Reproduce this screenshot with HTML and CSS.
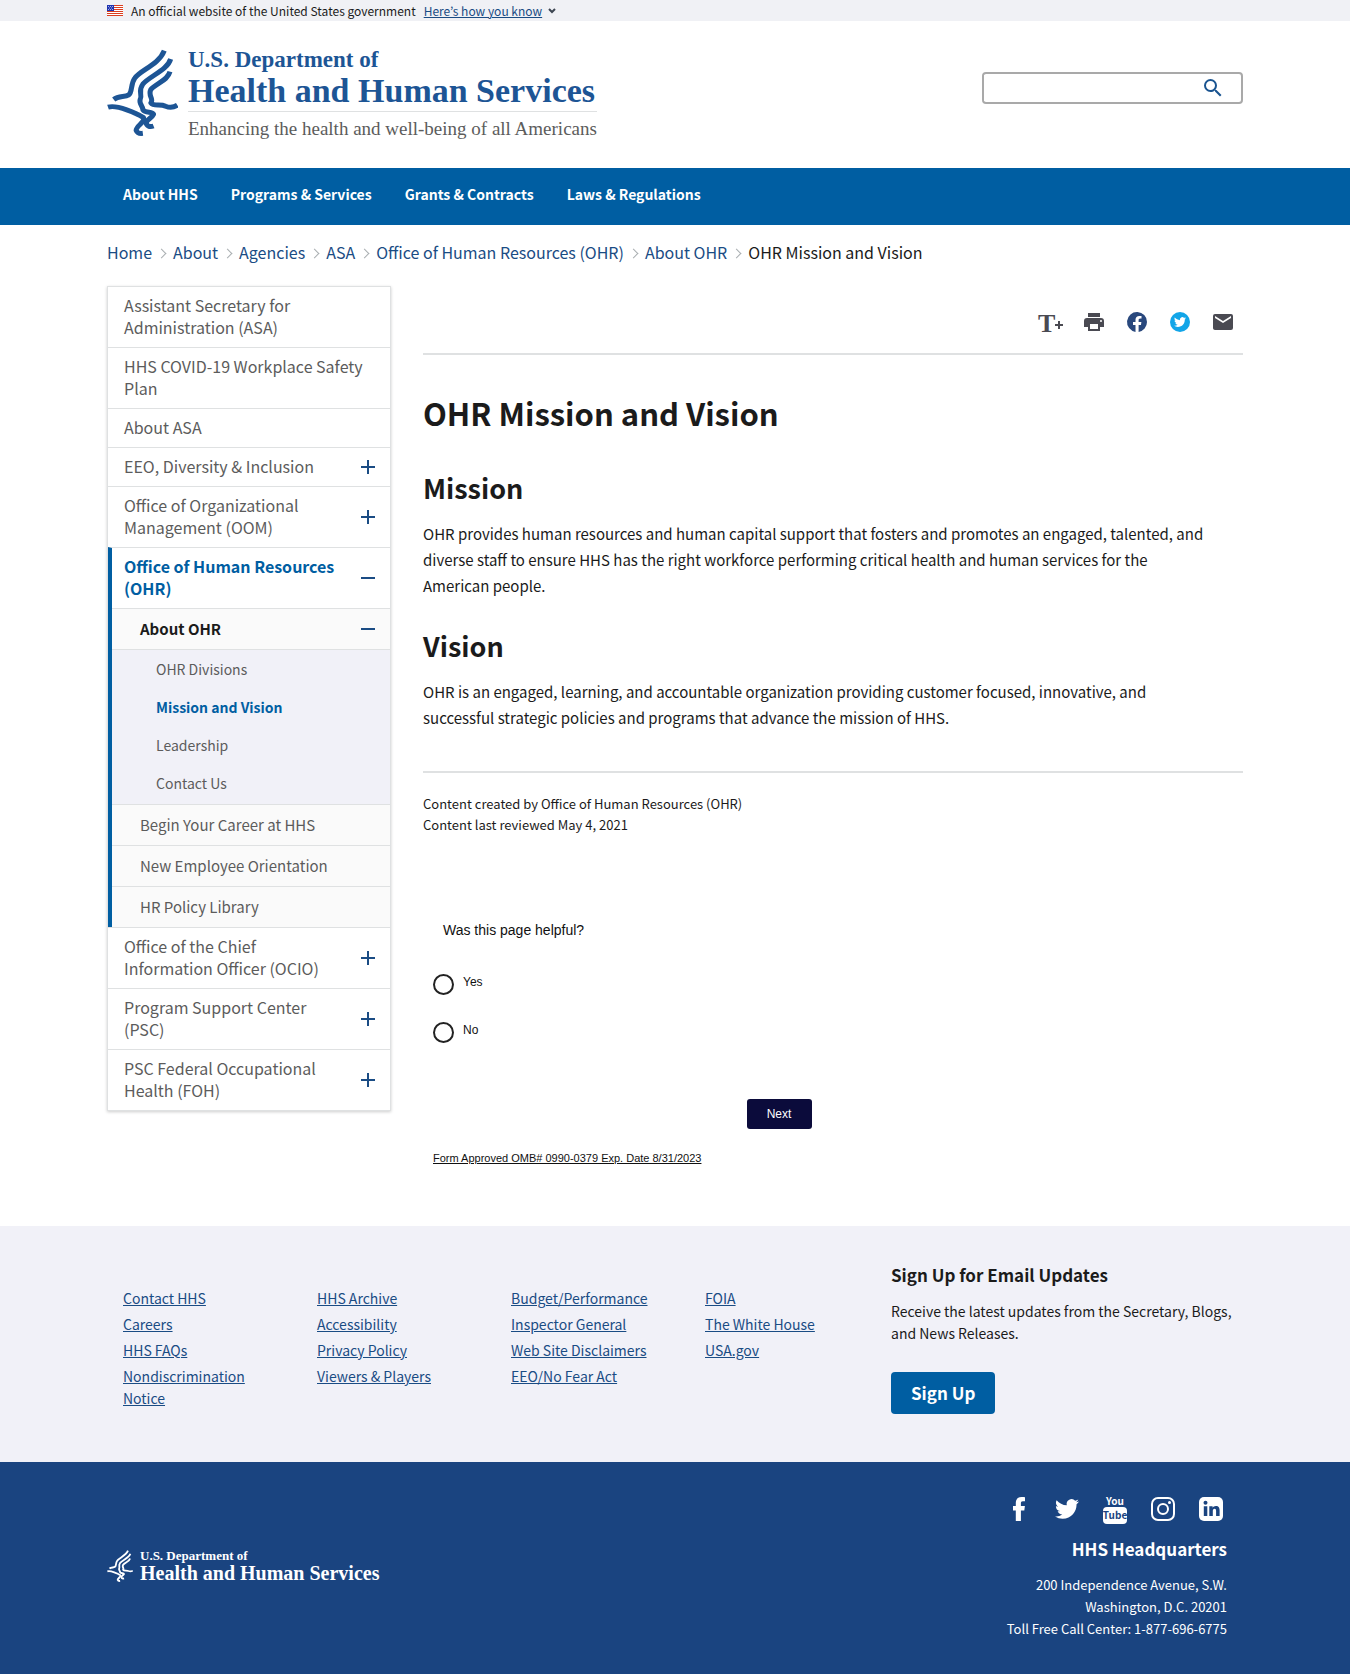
FILE: index.html
```html
<!DOCTYPE html>
<html lang="en">
<head>
<meta charset="utf-8">
<meta name="viewport" content="width=device-width, initial-scale=1">
<title>OHR Mission and Vision | HHS.gov</title>
<link rel="stylesheet" href="styles.css">
</head>
<body>
<svg class="sprite" aria-hidden="true">
  <symbol id="eagle" viewBox="51 150 212 258">
    <g fill="none" stroke="currentColor" stroke-width="15" stroke-linejoin="round">
      <path d="M71 300C86 288 104 294 116 286C128 276 120 256 134 236C150 212 206 196 222 154"/>
      <path d="M241 179C232 212 178 230 158 254C142 276 158 284 150 300C146 314 158 318 158 330C166 342 186 334 190 344C184 358 168 358 168 372C172 382 182 382 190 379"/>
      <path d="M239 217C232 244 200 250 182 270C172 290 192 296 182 310C190 322 210 312 226 320C240 326 250 324 261 317"/>
      <path d="M54 323C80 314 142 342 160 354C166 368 138 378 138 392C142 402 150 402 158 401"/>
    </g>
  </symbol>
  <symbol id="plus" viewBox="0 0 14 14"><path d="M7 0v14M0 7h14" stroke="currentColor" stroke-width="2"/></symbol>
  <symbol id="minus" viewBox="0 0 14 14"><path d="M0 7h14" stroke="currentColor" stroke-width="2"/></symbol>
  <symbol id="twitter" viewBox="0 0 24 24"><path fill="currentColor" d="M23.95 4.57a10 10 0 0 1-2.82.77 4.96 4.96 0 0 0 2.16-2.72c-.95.56-2 .96-3.12 1.19a4.92 4.92 0 0 0-8.39 4.48C7.69 8.09 4.07 6.13 1.64 3.16a4.82 4.82 0 0 0-.67 2.48c0 1.71.87 3.21 2.19 4.1a4.9 4.9 0 0 1-2.23-.62v.06a4.92 4.92 0 0 0 3.95 4.83 5 5 0 0 1-2.21.08 4.94 4.94 0 0 0 4.6 3.42A9.87 9.87 0 0 1 0 19.54a13.99 13.99 0 0 0 7.55 2.21c9.05 0 14-7.5 14-13.98 0-.21 0-.42-.02-.63a9.94 9.94 0 0 0 2.46-2.55z"/></symbol>
</svg>

<section class="banner" aria-label="Official government website">
  <div class="container banner-inner">
    <svg class="flag" viewBox="0 0 16 11" aria-hidden="true">
      <path fill="#fff" d="M0 0h16v11H0z"/>
      <path stroke="#db3e1f" d="M0 .5h16M0 2.5h16M0 4.5h16M0 6.5h16M0 8.5h16M0 10.5h16"/>
      <path fill="#1e33b1" d="M0 0h7v6H0z"/>
      <path stroke="#fff" stroke-dasharray="1 1" stroke-width=".6" d="M1 1.5h5M2 3h4M1 4.5h5"/>
    </svg>
    <span>An official website of the United States government</span>
    <button class="banner-button" type="button"><span>Here’s how you know</span>
      <svg width="8" height="6" viewBox="0 0 8 6" aria-hidden="true"><path d="M1 1l3 3 3-3" fill="none" stroke="currentColor" stroke-width="2"/></svg>
    </button>
  </div>
</section>

<header>
  <div class="container header-inner">
    <a class="logo" href="#">
      <svg class="logo-mark" aria-hidden="true"><use href="#eagle"/></svg>
      <span class="logo-text">
        <span class="logo-dept">U.S. Department of</span>
        <span class="logo-name">Health and Human Services</span>
        <span class="logo-tag">Enhancing the health and well-being of all Americans</span>
      </span>
    </a>
    <form class="search" role="search">
      <input type="search" aria-label="Search">
      <button type="button" aria-label="Submit search">
        <svg width="24" height="24" viewBox="0 0 24 24" aria-hidden="true"><path fill="currentColor" d="M15.5 14h-.79l-.28-.27A6.47 6.47 0 0 0 16 9.5 6.5 6.5 0 1 0 9.5 16c1.61 0 3.09-.59 4.23-1.57l.27.28v.79l5 4.99L20.49 19l-4.99-5zm-6 0a4.5 4.5 0 1 1 0-9 4.5 4.5 0 0 1 0 9z"/></svg>
      </button>
    </form>
  </div>
  <nav class="main-nav" aria-label="Primary">
    <ul class="container">
      <li><a href="#">About HHS</a></li>
      <li><a href="#">Programs &amp; Services</a></li>
      <li><a href="#">Grants &amp; Contracts</a></li>
      <li><a href="#">Laws &amp; Regulations</a></li>
    </ul>
  </nav>
</header>

<nav class="container" aria-label="Breadcrumb">
  <ol class="breadcrumb">
    <li><a href="#">Home</a></li>
    <li><a href="#">About</a></li>
    <li><a href="#">Agencies</a></li>
    <li><a href="#">ASA</a></li>
    <li><a href="#">Office of Human Resources (OHR)</a></li>
    <li><a href="#">About OHR</a></li>
    <li aria-current="page">OHR Mission and Vision</li>
  </ol>
</nav>

<div class="container columns">
  <nav class="sidenav" aria-label="Section">
    <ul>
      <li><div class="row"><a href="#">Assistant Secretary for Administration (ASA)</a></div></li>
      <li><div class="row"><a href="#">HHS COVID-19 Workplace Safety Plan</a></div></li>
      <li><div class="row"><a href="#">About ASA</a></div></li>
      <li><div class="row"><a href="#">EEO, Diversity &amp; Inclusion</a><button type="button" aria-label="Expand"><svg><use href="#plus"/></svg></button></div></li>
      <li><div class="row"><a href="#">Office of Organizational Management (OOM)</a><button type="button" aria-label="Expand"><svg><use href="#plus"/></svg></button></div></li>
      <li class="open">
        <div class="row"><a href="#">Office of Human Resources (OHR)</a><button type="button" aria-label="Collapse"><svg><use href="#minus"/></svg></button></div>
        <ul class="level-2">
          <li><div class="row current-parent"><a href="#">About OHR</a><button type="button" aria-label="Collapse"><svg><use href="#minus"/></svg></button></div>
            <ul class="level-3">
              <li><a href="#">OHR Divisions</a></li>
              <li><a class="current" href="#">Mission and Vision</a></li>
              <li><a href="#">Leadership</a></li>
              <li><a href="#">Contact Us</a></li>
            </ul>
          </li>
          <li><div class="row"><a href="#">Begin Your Career at HHS</a></div></li>
          <li><div class="row"><a href="#">New Employee Orientation</a></div></li>
          <li><div class="row"><a href="#">HR Policy Library</a></div></li>
        </ul>
      </li>
      <li><div class="row"><a href="#">Office of the Chief Information Officer (OCIO)</a><button type="button" aria-label="Expand"><svg><use href="#plus"/></svg></button></div></li>
      <li><div class="row"><a href="#">Program Support Center (PSC)</a><button type="button" aria-label="Expand"><svg><use href="#plus"/></svg></button></div></li>
      <li><div class="row"><a href="#">PSC Federal Occupational Health (FOH)</a><button type="button" aria-label="Expand"><svg><use href="#plus"/></svg></button></div></li>
    </ul>
  </nav>

  <main>
    <div class="tools">
      <button type="button" aria-label="Text resize"><svg viewBox="0 0 24 24"><text class="big-t" x="-1" y="22">T</text><path stroke="currentColor" stroke-width="2" d="M16 15h8M20 11v8"/></svg></button>
      <button type="button" aria-label="Print"><svg viewBox="0 0 24 24"><path fill="currentColor" d="M19 8H5a3 3 0 0 0-3 3v6h4v4h12v-4h4v-6a3 3 0 0 0-3-3zm-3 11H8v-5h8v5zm3-7a1 1 0 1 1 0-2 1 1 0 0 1 0 2zm-1-9H6v4h12V3z"/></svg></button>
      <a class="facebook" href="#" aria-label="Share on Facebook"><svg viewBox="0 0 24 24"><path fill="currentColor" d="M22 12a10 10 0 1 0-11.5 9.88v-7H8V12h2.500V9.800c0-2.500 1.500-3.900 3.770-3.900 1.100 0 2.240.2 2.240.2v2.460h-1.260c-1.240 0-1.630.77-1.630 1.560V12h2.770l-.44 2.890h-2.330v7A10 10 0 0 0 22 12z"/></svg></a>
      <a class="twitter" href="#" aria-label="Share on Twitter"><svg viewBox="0 0 24 24"><circle cx="12" cy="12" r="10" fill="currentColor"/><svg class="bird" x="6" y="6" width="12" height="12"><use href="#twitter"/></svg></svg></a>
      <a href="#" aria-label="Share by email"><svg viewBox="0 0 24 24"><path fill="currentColor" d="M20 4H4a2 2 0 0 0-2 2v12c0 1.100.9 2 2 2h16a2 2 0 0 0 2-2V6a2 2 0 0 0-2-2zm0 4-8 5-8-5V6l8 5 8-5v2z"/></svg></a>
    </div>

    <article>
      <h1>OHR Mission and Vision</h1>
      <h2>Mission</h2>
      <p>OHR provides human resources and human capital support that fosters and promotes an engaged, talented, and diverse staff to ensure HHS has the right workforce performing critical health and human services for the American people.</p>
      <h2>Vision</h2>
      <p>OHR is an engaged, learning, and accountable organization providing customer focused, innovative, and successful strategic policies and programs that advance the mission of HHS.</p>
    </article>

    <div class="meta">
      <div>Content created by Office of Human Resources (OHR)</div>
      <div>Content last reviewed May 4, 2021</div>
    </div>

    <form class="survey">
      <fieldset>
        <legend>Was this page helpful?</legend>
        <label><input type="radio" name="helpful" value="yes"><span>Yes</span></label>
        <label><input type="radio" name="helpful" value="no"><span>No</span></label>
      </fieldset>
      <button type="button">Next</button>
      <a href="#">Form Approved OMB# 0990-0379 Exp. Date 8/31/2023</a>
    </form>
  </main>
</div>

<footer>
  <div class="footer-top">
    <div class="container footer-grid">
      <ul>
        <li><a href="#">Contact HHS</a></li>
        <li><a href="#">Careers</a></li>
        <li><a href="#">HHS FAQs</a></li>
        <li><a href="#">Nondiscrimination Notice</a></li>
      </ul>
      <ul>
        <li><a href="#">HHS Archive</a></li>
        <li><a href="#">Accessibility</a></li>
        <li><a href="#">Privacy Policy</a></li>
        <li><a href="#">Viewers &amp; Players</a></li>
      </ul>
      <ul>
        <li><a href="#">Budget/Performance</a></li>
        <li><a href="#">Inspector General</a></li>
        <li><a href="#">Web Site Disclaimers</a></li>
        <li><a href="#">EEO/No Fear Act</a></li>
      </ul>
      <ul>
        <li><a href="#">FOIA</a></li>
        <li><a href="#">The White House</a></li>
        <li><a href="#">USA.gov</a></li>
      </ul>
      <section class="signup">
        <h3>Sign Up for Email Updates</h3>
        <p>Receive the latest updates from the Secretary, Blogs, and News Releases.</p>
        <button type="button">Sign Up</button>
      </section>
    </div>
  </div>
  <div class="footer-bottom">
    <div class="container footer-row">
      <a class="logo logo-small" href="#">
        <svg class="logo-mark" aria-hidden="true"><use href="#eagle"/></svg>
        <span class="logo-text">
          <span class="logo-dept">U.S. Department of</span>
          <span class="logo-name">Health and Human Services</span>
        </span>
      </a>
      <div class="contact">
        <div class="social">
          <a href="#" aria-label="Facebook"><svg viewBox="0 0 24 24"><path fill="currentColor" d="M8.800 24V13.400H6V9h2.800V6C8.800 2.200 10.900 0 14.600 0c1.300 0 2.600.1 3.400.2v4h-2.100c-1.600 0-2 .8-2 2V9h4l-.6 4.400h-3.400V24z"/></svg></a>
          <a href="#" aria-label="Twitter"><svg><use href="#twitter"/></svg></a>
          <a href="#" aria-label="YouTube"><svg class="youtube" viewBox="0 0 24 30"><text class="yt" x="12" y="11">You</text><rect y="13" width="24" height="17" rx="4" fill="currentColor"/><text class="yt yt-dark" x="12" y="25">Tube</text></svg></a>
          <a href="#" aria-label="Instagram"><svg viewBox="0 0 24 24"><g fill="none" stroke="currentColor" stroke-width="2"><rect x="1" y="1" width="22" height="22" rx="6"/><circle cx="12" cy="12" r="5"/></g><circle cx="18.500" cy="5.500" r="1.500" fill="currentColor"/></svg></a>
          <a href="#" aria-label="LinkedIn"><svg viewBox="0 0 24 24"><rect width="24" height="24" rx="5" fill="currentColor"/><g class="li"><circle cx="6.500" cy="5.800" r="2"/><path d="M4.800 9.200h3.500V19H4.800zM10.300 9.200h3.300v1.500c.6-1 1.700-1.800 3.300-1.800 2.900 0 3.700 1.900 3.700 4.500V19h-3.500v-5c0-1.300-.2-2.300-1.500-2.300s-1.800 1-1.800 2.300v5h-3.500z"/></g></svg></a>
        </div>
        <h3>HHS Headquarters</h3>
        <address>200 Independence Avenue, S.W.<br>Washington, D.C. 20201<br>Toll Free Call Center: 1-877-696-6775</address>
      </div>
    </div>
  </div>
</footer>
</body>
</html>
```
FILE: styles.css
```css
* { box-sizing: border-box; }

body {
  margin: 0;
  background: #fff;
  color: #1b1b1b;
  font-family: "Noto Sans CJK KR", "Noto Sans", sans-serif;
  font-size: 16px;
  line-height: 22px;
}

h1, h2, h3, p, ul, ol { margin: 0; padding: 0; }
ul, ol { list-style: none; }
a { color: #1a4c84; }
button { font: inherit; border: 0; padding: 0; background: none; cursor: pointer; }
.sprite { display: none; }

.container {
  max-width: 1200px;
  margin: 0 auto;
  padding: 0 32px;
}

/* Government banner */
.banner { background: #f0f1f5; font-size: 12px; line-height: 21px; }
.banner-inner { display: flex; align-items: center; gap: 8px; }
.flag { width: 16px; height: 11px; }
.banner-button { display: flex; align-items: center; gap: 6px; color: #3d4551; }
.banner-button span { color: #1a4c84; text-decoration: underline; }

/* Header */
.header-inner {
  display: flex;
  align-items: flex-start;
  justify-content: space-between;
  height: 147px;
  padding-top: 28px;
}
.logo {
  display: flex;
  gap: 10px;
  color: #1d5595;
  text-decoration: none;
  font-family: "Liberation Serif", serif;
}
.logo-mark { width: 71px; height: 87px; }
.logo-text { display: flex; flex-direction: column; white-space: nowrap; }
.logo-dept { font-size: 23px; line-height: 22px; font-weight: bold; }
.logo-name { font-size: 34px; line-height: 40px; font-weight: bold; }
.logo-tag {
  border-top: 1px solid #dfe1e2;
  color: #5c5c5c;
  font-size: 19px;
  line-height: 34px;
}
.search {
  display: flex;
  align-items: center;
  width: 261px;
  height: 32px;
  margin-top: 23px;
  border: 2px solid #a9a9a9;
  border-radius: 4px;
}
.search input { flex: 1; min-width: 0; height: 26px; border: 0; outline: 0; }
.search button { width: 56px; height: 28px; display: grid; place-items: center; color: #1a5490; }

.main-nav { background: #005ea2; }
.main-nav ul { display: flex; gap: 33px; padding: 15px 48px 20px; }
.main-nav a { display: block; color: #fff; font-size: 14px; font-weight: bold; text-decoration: none; }

/* Breadcrumb */
.breadcrumb { display: flex; padding: 16px 0 23px; }
.breadcrumb a { text-decoration: none; }
.breadcrumb li { display: flex; align-items: center; }
.breadcrumb li + li::before {
  content: "";
  width: 6px;
  height: 6px;
  margin: 2px 8px 0 6px;
  border: solid #a9aeb1;
  border-width: 1px 1px 0 0;
  transform: rotate(45deg);
}

/* Two-column body */
.columns { display: grid; grid-template-columns: 284px minmax(0, 1fr); gap: 32px; align-items: start; }

.sidenav { border: 1px solid #dfe1e2; box-shadow: 0 1px 3px rgba(0, 0, 0, .2); }
.sidenav a { display: block; color: #5c5c5c; text-decoration: none; }
.sidenav > ul > li + li, .level-2 > li, .level-3 { border-top: 1px solid #dfe1e2; }
.row { display: flex; align-items: center; }
.row a { flex: 1; padding: 7px 8px 9px 16px; }
.row button { width: 44px; height: 30px; display: grid; place-items: center; color: #1a4c84; }
.row svg { width: 14px; height: 14px; }
.open { border-left: 4px solid #005ea2; }
.open > .row a { padding-left: 12px; color: #005ea2; font-weight: bold; }
.level-2 { background: #fafafa; font-size: 15px; }
.level-2 .row a { padding: 9px 28px; }
.level-2 .current-parent a { color: #1b1b1b; font-weight: bold; }
.level-3 { background: #f1f1f8; padding-bottom: 2px; }
.level-3 a { padding: 8px 44px; font-size: 14px; }
.level-3 .current { color: #005ea2; font-weight: bold; }

.tools {
  display: flex;
  justify-content: flex-end;
  gap: 19px;
  padding: 24px 8px 19px 0;
  border-bottom: 2px solid #dfe1e2;
}
.tools a, .tools button { color: #4a4a52; height: 24px; }
.tools svg { display: block; width: 24px; height: 24px; overflow: visible; }
.tools .bird { width: 12px; height: 12px; color: #fff; }
.tools .facebook { color: #29487d; }
.tools .twitter { color: #12a5e8; }
.big-t { font: bold 26px "Liberation Serif", serif; fill: currentColor; }

article { padding: 34px 0 40px; border-bottom: 2px solid #dfe1e2; }
h1 { font-size: 31px; line-height: 48px; }
h2 { margin-top: 32px; font-size: 27px; line-height: 38px; }
article p { margin-top: 14px; padding-right: 32px; font-size: 15px; line-height: 26px; }
p + h2 { margin-top: 28px; }
.meta { padding-top: 20px; font-size: 13px; line-height: 21px; }

.survey {
  display: flex;
  flex-direction: column;
  max-width: 712px;
  padding: 87px 10px 60px;
  color: #111;
  font: 12px/16px "Liberation Sans", sans-serif;
}
.survey fieldset { margin: 0; padding: 0; border: 0; display: flex; flex-direction: column; }
.survey legend { padding: 0 10px 36px; font-size: 14px; }
.survey label { display: flex; gap: 9px; height: 48px; }
.survey input {
  appearance: none;
  width: 21px;
  height: 21px;
  margin: 0;
  border: 2px solid #222;
  border-radius: 50%;
}
.survey button { align-self: center; width: 65px; height: 30px; margin-top: 29px; border-radius: 3px; background: #0b0b3b; color: #fff; }
.survey a { align-self: flex-start; margin-top: 21px; color: #111; font-size: 11px; }

/* Footer */
.footer-top { background: #f1f1f8; }
.footer-grid {
  display: grid;
  grid-template-columns: repeat(4, 194px) minmax(0, 1fr);
  padding: 37px 32px 48px 48px;
  font-size: 14px;
}
.footer-grid ul { display: flex; flex-direction: column; gap: 4px; padding: 24px 48px 0 0; white-space: nowrap; }
.footer-grid ul:first-child { white-space: normal; }
.signup { margin-left: -8px; }
.signup h3 { font-size: 17px; line-height: 24px; }
.signup p { margin-top: 13px; padding-right: 4px; }
.signup button { margin-top: 28px; padding: 0 20px; height: 42px; border-radius: 4px; background: #005ea2; color: #fff; font-size: 17px; font-weight: bold; }

.footer-bottom { background: #1a4480; color: #fff; }
.footer-row { display: flex; align-items: center; justify-content: space-between; padding-top: 32px; padding-bottom: 34px; }
.logo-small { gap: 7px; color: #fff; }
.logo-small .logo-mark { width: 26px; height: 32px; }
.logo-small .logo-dept { font-size: 13px; line-height: 12px; }
.logo-small .logo-name { font-size: 20px; line-height: 22px; }
.contact { padding-right: 16px; text-align: right; }
.social { display: flex; justify-content: flex-end; align-items: center; gap: 24px; padding-right: 4px; height: 30px; }
.social a { color: #fff; }
.social svg { display: block; width: 24px; height: 24px; }
.social .youtube { height: 30px; }
.yt { font: bold 10px "Noto Sans CJK KR", sans-serif; text-anchor: middle; fill: currentColor; }
.yt-dark, .li { fill: #1a4480; }
.contact h3 { margin: 12px 0; font-size: 17px; line-height: 26px; }
address { font-style: normal; font-size: 13px; line-height: 22px; }
```
